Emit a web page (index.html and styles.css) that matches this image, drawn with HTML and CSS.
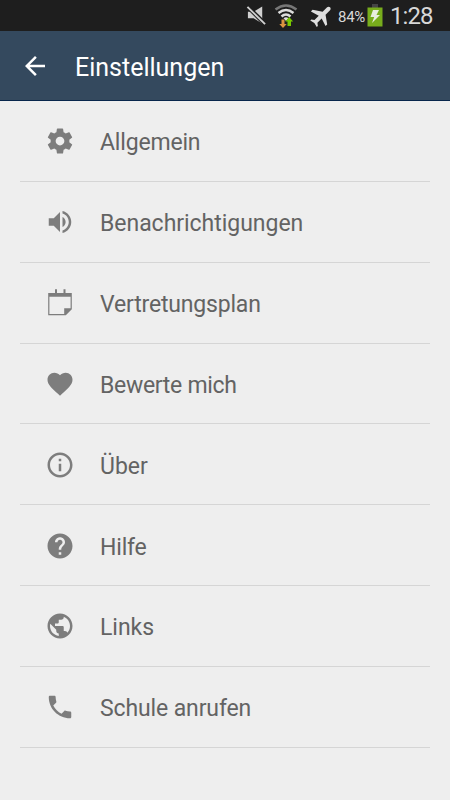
FILE: index.html
```html
<!DOCTYPE html>
<html lang="de">
<head>
<meta charset="utf-8">
<title>Einstellungen</title>
<link rel="stylesheet" href="styles.css">
</head>
<body>
<div class="statusbar">
  <svg class="mute" viewBox="0 0 22 22"><path d="M2 7h6l9-5.500v18L8 14H2z" fill="#d0d0d0"/><path d="M1.500 1.500l18 18" stroke="#1e1e1e" stroke-width="4.500"/><path d="M1.500 2l18.500 18" stroke="#d0d0d0" stroke-width="2"/></svg>
  <svg class="wifi" viewBox="0 0 24 24"><g fill="none" stroke-width="2.500"><path d="M1.500 5.500Q12-2.500 22.500 5.500" stroke="#777"/><path d="M4.500 9Q12 3 19.500 9" stroke="#ddd"/><path d="M7.500 12.500Q12 8.500 16.500 12.500" stroke="#ddd"/></g><path d="M9.500 14.200q2.500-2 5 0L12 17z" fill="#ddd"/><path d="M7.500 15.500h3v4.500h2.200L9 24 5.300 20h2.200z" fill="#dc9440"/><path d="M13.500 22v-4.500h-2.200l3.900-4.500 3.900 4.500H17V22z" fill="#78c800"/></svg>
  <svg class="plane" viewBox="2 2 20 20"><path transform="rotate(45 12 12)" d="M21 16v-2l-7-5V3.500c0-1-.8-1.800-1.800-1.800s-1.800.8-1.800 1.800V9l-7.400 5v2l7.400-2.200V19l-2.200 1.700V22l4-1 4 1v-1.300L14 19v-5.200z" fill="#dedede"/></svg>
  <span class="percent">84%</span>
  <svg class="battery" viewBox="0 0 16 23"><path d="M5 0h6v4H5z" fill="#454545"/><path d="M.5 3.500h15v19H.5z" fill="#78ad1c"/><path d="M6 6h6l-2.500 5H13l-8 8 2.200-6H3.500z" fill="#e8eddf"/></svg>
  <span class="clock">1:28</span>
</div>
<header class="appbar">
  <svg class="icon back" viewBox="0 0 24 24"><path d="M20 11H7.830l5.590-5.590L12 4l-8 8 8 8 1.410-1.410L7.830 13H20v-2z"/></svg>
  <h1 class="title">Einstellungen</h1>
</header>
<main class="list">
  <div class="row"><svg class="icon" viewBox="0 0 24 24"><path d="M19.430 12.980c.04-.32.07-.64.07-.98s-.03-.66-.07-.98l2.110-1.650c.19-.15.24-.42.12-.64l-2-3.460c-.12-.22-.39-.3-.61-.22l-2.490 1c-.52-.4-1.080-.73-1.690-.98l-.38-2.650C14.460 2.180 14.250 2 14 2h-4c-.25 0-.46.18-.49.42l-.38 2.650c-.61.25-1.170.59-1.690.98l-2.490-1c-.23-.09-.49 0-.61.22l-2 3.460c-.13.22-.07.49.12.64l2.110 1.650c-.04.32-.07.65-.07.98s.03.66.07.98l-2.110 1.650c-.19.15-.24.42-.12.64l2 3.460c.12.22.39.3.61.22l2.490-1c.52.4 1.080.73 1.690.98l.38 2.650c.03.24.24.42.49.42h4c.25 0 .46-.18.49-.42l.38-2.650c.61-.25 1.170-.59 1.690-.98l2.490 1c.23.09.49 0 .61-.22l2-3.460c.12-.22.07-.49-.12-.64l-2.110-1.650zM12 15.500c-1.930 0-3.500-1.570-3.500-3.500s1.570-3.500 3.500-3.500 3.500 1.570 3.500 3.500-1.570 3.500-3.500 3.500z"/></svg><span class="label tight">Allgemein</span></div>
  <div class="row"><svg class="icon" viewBox="0 0 24 24"><path d="M3 9v6h4l5 5V4L7 9H3zm13.500 3c0-1.770-1.020-3.290-2.500-4.030v8.050c1.480-.73 2.500-2.250 2.500-4.020zM14 3.230v2.060c2.890.86 5 3.540 5 6.710s-2.110 5.850-5 6.710v2.060c4.010-.91 7-4.490 7-8.770s-2.990-7.860-7-8.770z"/></svg><span class="label">Benachrichtigungen</span></div>
  <div class="row"><svg class="icon" viewBox="0 0 30 30"><path d="M3.200 5h6.800V1.200h2V5h6.500V1.200h2V5h6.300v16.300l-6 6H3.200zm1.200 3.700v17.400h14.800v-5.800h6.400V8.700z" fill-rule="evenodd"/></svg><span class="label tight">Vertretungsplan</span></div>
  <div class="row"><svg class="icon" viewBox="0 0 24 24"><path d="M12 21.350l-1.450-1.320C5.400 15.360 2 12.280 2 8.500 2 5.420 4.420 3 7.500 3c1.740 0 3.410.81 4.500 2.090C13.090 3.810 14.760 3 16.500 3 19.580 3 22 5.420 22 8.500c0 3.780-3.400 6.860-8.550 11.540L12 21.350z"/></svg><span class="label tighter">Bewerte mich</span></div>
  <div class="row"><svg class="icon" viewBox="0 0 24 24"><path d="M11 17h2v-6h-2v6zm1-15C6.480 2 2 6.480 2 12s4.480 10 10 10 10-4.480 10-10S17.520 2 12 2zm0 18c-4.410 0-8-3.590-8-8s3.590-8 8-8 8 3.590 8 8-3.590 8-8 8zM11 9h2V7h-2v2z"/></svg><span class="label">Über</span></div>
  <div class="row"><svg class="icon" viewBox="0 0 24 24"><path d="M12 2C6.480 2 2 6.480 2 12s4.480 10 10 10 10-4.480 10-10S17.520 2 12 2zm1 17h-2v-2h2v2zm2.070-7.750l-.9.920C13.450 12.900 13 13.500 13 15h-2v-.5c0-1.100.45-2.100 1.170-2.830l1.240-1.260c.37-.36.590-.86.590-1.410 0-1.100-.9-2-2-2s-2 .9-2 2H8c0-2.210 1.790-4 4-4s4 1.790 4 4c0 .88-.36 1.680-.93 2.250z"/></svg><span class="label tight">Hilfe</span></div>
  <div class="row"><svg class="icon" viewBox="0 0 24 24"><path d="M12 2C6.480 2 2 6.480 2 12s4.480 10 10 10 10-4.480 10-10S17.520 2 12 2zm-1 17.930c-3.950-.49-7-3.850-7-7.930 0-.62.080-1.210.210-1.790L9 15v1c0 1.100.9 2 2 2v1.930zm6.900-2.540c-.26-.81-1-1.390-1.900-1.390h-1v-3c0-.55-.45-1-1-1H8v-2h2c.55 0 1-.45 1-1V7h2c1.100 0 2-.9 2-2v-.41c2.930 1.190 5 4.060 5 7.410 0 2.080-.8 3.970-2.100 5.390z"/></svg><span class="label">Links</span></div>
  <div class="row"><svg class="icon" viewBox="0 0 24 24"><path d="M6.620 10.790c1.440 2.830 3.760 5.140 6.590 6.590l2.200-2.200c.27-.27.67-.36 1.020-.24 1.120.37 2.330.57 3.570.57.55 0 1 .45 1 1V20c0 .55-.45 1-1 1-9.390 0-17-7.610-17-17 0-.55.45-1 1-1h3.500c.55 0 1 .45 1 1 0 1.250.2 2.450.57 3.570.11.35.03.74-.25 1.020l-2.200 2.200z"/></svg><span class="label snug">Schule anrufen</span></div>
</main>
</body>
</html>
```
FILE: styles.css
```css
* { box-sizing: border-box; }
body { margin: 0; height: 800px; overflow: hidden; background: #eee; font-family: Roboto, sans-serif; }
svg { display: block; flex: none; }
.statusbar { height: 31px; background: #1e1e1e; display: flex; align-items: center; color: #d8d8d8; padding-left: 246px; }
.mute { width: 21px; height: 21px; }
.wifi { width: 24px; height: 24px; margin-left: 7px; }
.plane { width: 23px; height: 23px; margin-left: 12px; }
.percent { font-size: 15px; width: 30px; margin-left: 5px; letter-spacing: -0.3px; padding-top: 2px; }
.battery { width: 16px; height: 23px; margin: 0 0 0 -1px; }
.clock { font-size: 24px; margin-left: 7px; line-height: 30px; letter-spacing: -0.9px; white-space: nowrap; }
.appbar { height: 70px; background: #34495e; border-bottom: 1px solid #08264c; display: flex; align-items: center; padding-left: 20px; color: #fff; }
.title { margin: 4px 0 0 25px; font-size: 25px; font-weight: 400; line-height: 30px; }
.icon { width: 30px; height: 30px; margin-top: 1px; fill: #7d7d7d; }
.back { fill: #fff; }
.list { padding: 0 20px; }
.row { height: 80.85px; border-bottom: 1px solid #d5d5d5; display: flex; align-items: center; padding-left: 25px; }
.label { margin: 5px 0 0 25px; font-size: 23px; line-height: 28px; color: #636363; white-space: nowrap; letter-spacing: -0.03px; }
.tight { letter-spacing: -0.18px; }
.tighter { letter-spacing: -0.3px; }
.snug { letter-spacing: -0.12px; }
```
